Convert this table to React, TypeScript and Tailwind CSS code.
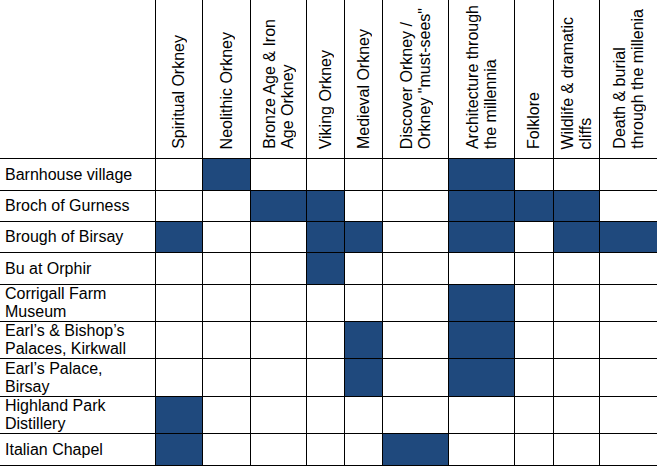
import React from "react";

const headers: string[][] = [
  ["Spiritual Orkney"],
  ["Neolithic Orkney"],
  ["Bronze Age & Iron", "Age Orkney"],
  ["Viking Orkney"],
  ["Medieval Orkney"],
  ["Discover Orkney /", "Orkney \"must-sees\""],
  ["Architecture through", "the millennia"],
  ["Folklore"],
  ["Wildlife & dramatic", "cliffs"],
  ["Death & burial", "through the millenia"],
];

const rows: { label: string[]; on: number[] }[] = [
  { label: ["Barnhouse village"], on: [2, 7] },
  { label: ["Broch of Gurness"], on: [3, 4, 7, 8, 9] },
  { label: ["Brough of Birsay"], on: [1, 4, 5, 7, 9, 10] },
  { label: ["Bu at Orphir"], on: [4] },
  { label: ["Corrigall Farm", "Museum"], on: [7] },
  { label: ["Earl\u2019s & Bishop\u2019s", "Palaces, Kirkwall"], on: [5, 7] },
  { label: ["Earl\u2019s Palace,", "Birsay"], on: [5, 7] },
  { label: ["Highland Park", "Distillery"], on: [1] },
  { label: ["Italian Chapel"], on: [1, 6] },
];

export default function App() {
  return (
    <div className="w-[657px] h-[466px] overflow-hidden bg-white text-black font-['Liberation_Sans',Arial,sans-serif]">
      <div className="grid grid-cols-[156px_47px_48px_56px_38px_38px_66px_66px_39px_46px_57px] grid-rows-[159px_32px_31px_31px_32px_37px_37px_38px_37px_32px]">
        <div className="border-b border-r border-black" />
        {headers.map((h, i) => (
          <div
            key={i}
            className={
              "flex items-end justify-center pb-[9px] border-b border-black " +
              (i === headers.length - 1 ? "" : "border-r")
            }
          >
            <div className="[writing-mode:vertical-rl] rotate-180 text-[16px] leading-[18px] whitespace-nowrap">
              {h.map((line, j) => (
                <div key={j}>{line}</div>
              ))}
            </div>
          </div>
        ))}
        {rows.map((r, ri) => (
          <React.Fragment key={ri}>
            <div className="flex flex-col justify-center pl-[5px] border-b border-r border-black text-[16px] leading-[18px] whitespace-nowrap">
              {r.label.map((line, j) => (
                <div key={j}>{line}</div>
              ))}
            </div>
            {headers.map((_, ci) => {
              const filled = r.on.includes(ci + 1);
              return (
                <div
                  key={ci}
                  className={
                    "border-b border-black " +
                    (ci === headers.length - 1 ? "" : "border-r ") +
                    (filled ? "bg-[#1f497d]" : "bg-white")
                  }
                />
              );
            })}
          </React.Fragment>
        ))}
      </div>
    </div>
  );
}
